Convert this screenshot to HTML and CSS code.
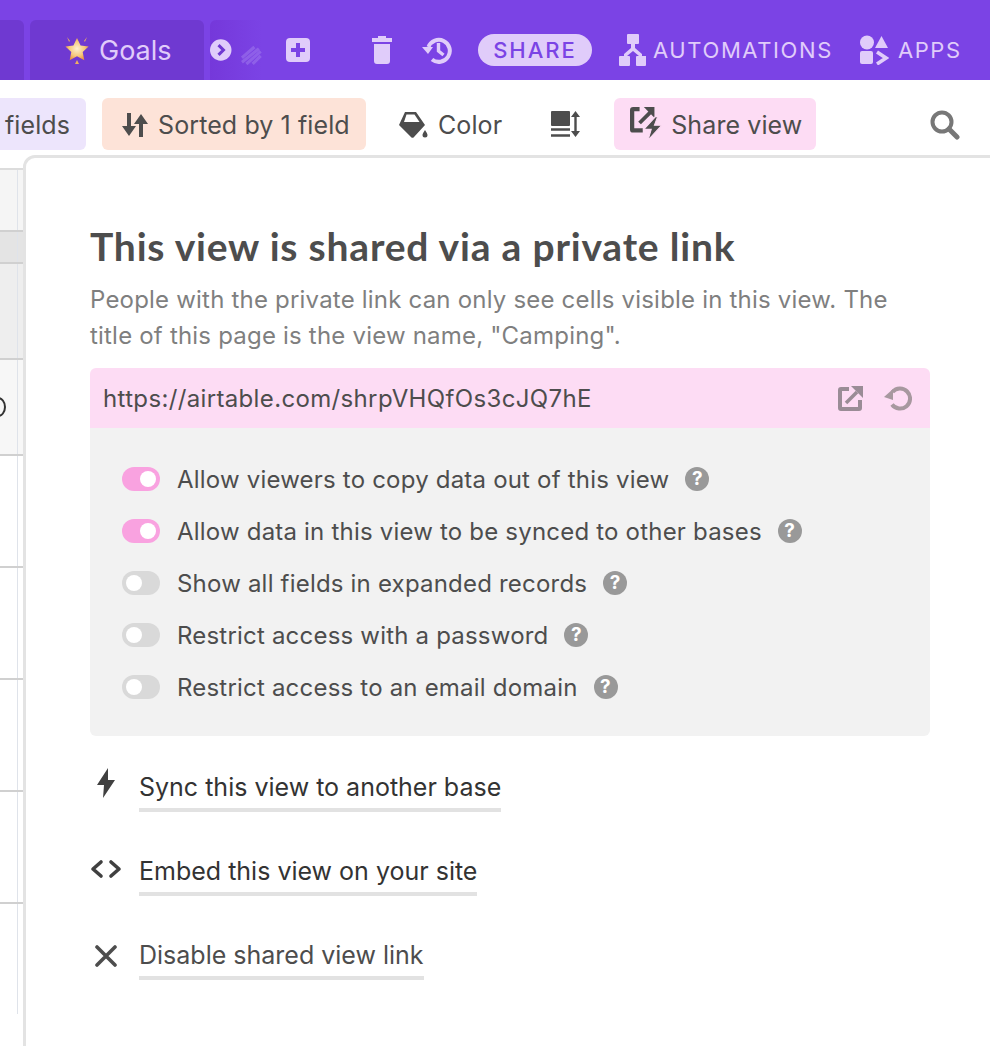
FILE: index.html
```
<!DOCTYPE html>
<html>
<head>
<meta charset="utf-8">
<title>Share view</title>
<link rel="stylesheet" href="styles.css">
</head>
<body>
<div class="app">

  <div class="topbar">
    <div class="tab tab-cut"></div>
    <div class="tab tab-goals">
      <svg class="star" width="28" height="30" viewBox="0 0 28 30">
        <defs><radialGradient id="starfill" cx="50%" cy="48%" r="55%"><stop offset="0" stop-color="#fdf0d0"/><stop offset="0.6" stop-color="#f6c97c"/><stop offset="1" stop-color="#e98f3c"/></radialGradient></defs>
        <path d="M14 3l3.6 7.6 8 1-5.9 5.500 1.6 8.100L14 21.300l-7.300 3.900 1.600-8.100L2.400 11.600l8-1z" fill="url(#starfill)"/>
        <path d="M4 2l3 4-1 .8zM24 2l-3 4 1 .8zM14 25l2 4h-4z" fill="#f0b060"/>
      </svg>
      <span>Goals</span>
    </div>
    <div class="tab-more">
      <svg width="24" height="24" viewBox="0 0 24 24"><circle cx="12" cy="12" r="12" fill="#e0ccfa"/><path d="M9.500 6.500L15 12l-5.500 5.500" fill="none" stroke="#6f39d1" stroke-width="3.400"/></svg>
      <svg class="smear" width="24" height="22" viewBox="0 0 24 22"><path d="M1 14L15 2M1 19L20 4M6 21L22 7M13 21L22 12" fill="none" stroke="#a885f0" stroke-width="3.500"/></svg>
    </div>
    <svg class="add" width="24" height="24" viewBox="0 0 24 24"><rect width="24" height="24" rx="4" fill="#e0ccfa"/><path d="M12 5v14M5 12h14" stroke="#7b43e5" stroke-width="4"/></svg>
    <svg class="trash" width="20" height="28" viewBox="0 0 20 28"><path d="M6 0h8v2h6v4H0V2h6zM2 8h16v17a3 3 0 0 1-3 3H5a3 3 0 0 1-3-3z" fill="#e0ccfa"/></svg>
    <svg class="history" width="30" height="28" viewBox="0 0 30 28"><path d="M6.500 11A11 11 0 1 1 10 23.500" fill="none" stroke="#e0ccfa" stroke-width="4"/><path d="M0 11h11l-5 7z" fill="#e0ccfa"/><path d="M16.500 7v8l5 4" fill="none" stroke="#e0ccfa" stroke-width="3.400"/></svg>
    <div class="share-pill">SHARE</div>
    <div class="top-link automations">
      <svg width="28" height="32" viewBox="0 0 28 32"><path d="M9 0h10a1 1 0 0 1 1 1v8a1 1 0 0 1-1 1h-3v4l7 6v2h4v9a1 1 0 0 1-1 1H18a1 1 0 0 1-1-1v-8a1 1 0 0 1 1-1h2l-6-5-6 5h2a1 1 0 0 1 1 1v8a1 1 0 0 1-1 1H1a1 1 0 0 1-1-1v-8a1 1 0 0 1 1-1h4v-2l7-6v-4H9a1 1 0 0 1-1-1V1a1 1 0 0 1 1-1z" fill="#e0ccfa"/></svg>
      <span>AUTOMATIONS</span>
    </div>
    <div class="top-link apps">
      <svg width="30" height="30" viewBox="0 0 30 30"><circle cx="8" cy="7.500" r="7" fill="#e0ccfa"/><path d="M16 13L22.500 1 29 13z" fill="#e0ccfa"/><rect x="1" y="16" width="13" height="13" rx="2" fill="#e0ccfa"/><path d="M18 17l9 6-9 6" fill="none" stroke="#e0ccfa" stroke-width="3.600"/></svg>
      <span>APPS</span>
    </div>
  </div>

  <div class="toolbar">
    <div class="tool tool-fields">fields</div>
    <div class="tool tool-sort">
      <svg width="26" height="24" viewBox="0 0 26 24"><path d="M5 0h4v13h5l-7 10L0 13h5zM17 24h4V11h5L19 1l-7 10h5z" fill="#4d4d4d"/></svg>
      <span>Sorted by 1 field</span>
    </div>
    <div class="tool tool-color">
      <svg width="30" height="28" viewBox="0 0 30 28"><path d="M7 1h11l9 13L16 26a2 2 0 0 1-3 0L1 14z" fill="#4d4d4d"/><path d="M8.500 3.500h8l5 7.500H6z" fill="#fff"/><path d="M27 19c1.600 2.600 2.500 4 2.500 5a2.500 2.500 0 0 1-5 0c0-1 .9-2.400 2.500-5z" fill="#4d4d4d"/></svg>
      <span>Color</span>
    </div>
    <svg class="row-height" width="30" height="28" viewBox="0 0 30 28"><rect x="0" y="1" width="19" height="15" rx="1" fill="#4d4d4d"/><path d="M0 19.500h19M0 25.500h19" stroke="#4d4d4d" stroke-width="2.400"/><path d="M24.500 3v22" stroke="#4d4d4d" stroke-width="2.400"/><path d="M20 7l4.500-6L29 7zM20 21l4.500 6 4.500-6z" fill="#4d4d4d"/></svg>
    <div class="tool tool-share">
      <svg width="34" height="34" viewBox="0 0 32 32"><path d="M9 3H3a1 1 0 0 0-1 1v18a1 1 0 0 0 1 1h9" fill="none" stroke="#4d4d4d" stroke-width="4"/><path d="M9 16L20 5" stroke="#4d4d4d" stroke-width="3.600"/><path d="M13 1h10v10z" fill="#4d4d4d"/><path d="M24 10l-11 12h7l-3 10 13-14h-7l3-8z" fill="#4d4d4d" stroke="#fddcf4" stroke-width="1"/></svg>
      <span>Share view</span>
    </div>
    <svg class="search" width="30" height="30" viewBox="0 0 30 30"><circle cx="12" cy="12" r="9.500" fill="none" stroke="#777" stroke-width="4"/><path d="M19 19l8 8" stroke="#777" stroke-width="5" stroke-linecap="round"/></svg>
  </div>

  <div class="body-row">
    <div class="grid-strip">
      <div class="grid-head"></div>
      <div class="grid-row row-group"></div>
      <div class="grid-row row-sel"></div>
      <div class="grid-row row-a"></div>
      <div class="grid-row row-b"></div>
      <div class="grid-row row-b"></div>
      <div class="grid-row row-b"></div>
      <div class="grid-row row-b"></div>
      <div class="grid-row row-b"></div>
    </div>

    <div class="popover">
      <h1>This view is shared via a private link</h1>
      <p class="lead">People with the private link can only see cells visible in this view. The title of this page is the view name, "Camping".</p>

      <div class="link-bar">
        <span>https://airtable.com/shrpVHQfOs3cJQ7hE</span>
        <svg width="26" height="26" viewBox="0 0 26 26"><path d="M11 4H3a1 1 0 0 0-1 1v18a1 1 0 0 0 1 1h18a1 1 0 0 0 1-1v-8" fill="none" stroke="#9a8c96" stroke-width="4"/><path d="M8 18L19 7" stroke="#9a8c96" stroke-width="3.600"/><path d="M13 1h12v12z" fill="#9a8c96"/></svg>
        <svg class="reset" width="28" height="26" viewBox="0 0 28 26"><path d="M8.500 7A10 10 0 1 1 8 19.500" fill="none" stroke="#a7989f" stroke-width="4"/><path d="M0 12l9-8v11z" fill="#a7989f"/></svg>
      </div>

      <div class="options">
        <div class="option"><i class="toggle on"></i><span>Allow viewers to copy data out of this view</span><b class="help">?</b></div>
        <div class="option"><i class="toggle on"></i><span>Allow data in this view to be synced to other bases</span><b class="help">?</b></div>
        <div class="option"><i class="toggle"></i><span>Show all fields in expanded records</span><b class="help">?</b></div>
        <div class="option"><i class="toggle"></i><span>Restrict access with a password</span><b class="help">?</b></div>
        <div class="option"><i class="toggle"></i><span>Restrict access to an email domain</span><b class="help">?</b></div>
      </div>

      <div class="actions">
        <div class="action">
          <svg class="icon-sync" width="32" height="30" viewBox="0 0 32 30"><path d="M18 0L7 17h7l-1 13L25 12h-7z" fill="#404040"/></svg>
          <span>Sync this view to another base</span>
        </div>
        <div class="action">
          <svg class="icon-embed" width="32" height="20" viewBox="0 0 32 20"><path d="M11 3L3 10l8 7M21 3l8 7-8 7" fill="none" stroke="#404040" stroke-width="3.600" stroke-linecap="round" stroke-linejoin="round"/></svg>
          <span>Embed this view on your site</span>
        </div>
        <div class="action action-off">
          <svg class="icon-off" width="32" height="22" viewBox="0 0 32 22"><path d="M7 2l18 18M25 2L7 20" stroke="#4d4d4d" stroke-width="3.600" stroke-linecap="round"/></svg>
          <span>Disable shared view link</span>
        </div>
      </div>
    </div>
  </div>

</div>
</body>
</html>
```

FILE: styles.css
```
* {
    box-sizing: border-box;
}

html, body {
    margin: 0;
    padding: 0;
    background: #fff;
}

.app {
    width: 990px;
    height: 1046px;
    overflow: hidden;
    font-family: Inter, "Liberation Sans", sans-serif;
    color: #4d4d4d;
}

/* top purple bar */
.topbar {
    height: 80px;
    background: #7b43e5;
    display: flex;
    align-items: flex-end;
    color: #e0ccfa;
}

.tab {
    height: 60px;
    background: #6f39d1;
    border-radius: 6px 6px 0 0;
}

.tab-cut {
    width: 24px;
    border-radius: 0 6px 0 0;
}

.tab-goals {
    width: 174px;
    margin-left: 6px;
    display: flex;
    align-items: center;
    padding-left: 33px;
    font-size: 27px;
}

.tab-goals span {
    margin-left: 8px;
}

.tab-more {
    height: 60px;
    width: 52px;
    margin-left: 6px;
    display: flex;
    align-items: center;
    background: linear-gradient(90deg, #7538da, #7b43e5);
    border-radius: 6px 0 0 0;
}

.smear {
    margin-left: 9px;
    margin-top: 10px;
    opacity: 0.45;
}

.add {
    margin-left: 24px;
    margin-bottom: 18px;
}

.trash {
    margin-left: 62px;
    margin-bottom: 16px;
}

.history {
    margin-left: 30px;
    margin-bottom: 16px;
}

.share-pill {
    width: 114px;
    height: 32px;
    margin-left: 26px;
    margin-bottom: 14px;
    border-radius: 16px;
    background: #e0ccfa;
    color: #7b43e5;
    font-size: 22px;
    font-weight: 500;
    letter-spacing: 2px;
    display: flex;
    align-items: center;
    justify-content: center;
}

.top-link {
    display: flex;
    align-items: center;
    height: 60px;
    font-size: 22px;
    letter-spacing: 1.6px;
}

.automations {
    margin-left: 27px;
}

.automations span {
    margin-left: 6px;
}

.apps {
    margin-left: 26px;
}

.apps span {
    margin-left: 9px;
}

/* view toolbar */
.toolbar {
    height: 75px;
    padding-top: 18px;
    display: flex;
    align-items: flex-start;
    font-size: 25px;
    letter-spacing: 0.1px;
}

.tool {
    height: 52px;
    padding-top: 2px;
    border-radius: 6px;
    display: flex;
    align-items: center;
}

.tool-fields {
    width: 86px;
    padding-left: 5px;
    background: #ede5fc;
    border-radius: 0 6px 6px 0;
}

.tool-sort {
    width: 264px;
    margin-left: 16px;
    padding-left: 20px;
    background: #fde3d8;
}

.tool-sort span {
    margin-left: 10px;
}

.tool-color {
    margin-left: 32px;
}

.tool-color span {
    margin-left: 10px;
}

.row-height {
    margin-left: 49px;
    margin-top: 12px;
}

.tool-share {
    width: 202px;
    margin-left: 33px;
    padding-left: 16px;
    background: #fddcf4;
}

.tool-share svg {
    margin-top: -4px;
}

.tool-share span {
    margin-left: 7px;
}

.search {
    margin-left: 114px;
    margin-top: 12px;
}

/* grid behind the popover */
.body-row {
    display: flex;
    align-items: flex-start;
}

.grid-strip {
    width: 23px;
    flex: none;
    margin-top: 13px;
    border-top: 2px solid #dcdcdc;
}

.grid-head,
.grid-row {
    background-image: linear-gradient(90deg, transparent 17px, #dfe3ea 17px, #dfe3ea 18px, transparent 18px);
}

.grid-head {
    height: 60px;
    background-color: #f5f5f5;
}

.grid-row {
    border-top: 2px solid #d0d0d0;
}

.row-group {
    height: 32px;
    background-color: #e4e4e4;
}

.row-sel {
    height: 96px;
    background-color: #eeeeee;
}

/* edge of a cell value that the popover hides */
.row-a {
    height: 96px;
    background-color: #f7f7f7;
    overflow: hidden;
    display: flex;
    align-items: center;
}

.row-a::before {
    content: "";
    flex: none;
    width: 12px;
    height: 16px;
    margin-left: -10px;
    border: 2px solid #333;
    border-radius: 50%;
}

.row-b {
    height: 112px;
    background-color: #fff;
}

/* share popover */
.popover {
    width: 990px;
    height: 900px;
    flex: none;
    padding: 66px 0 0 64px;
    background: #fff;
    border: 3px solid #e3e3e3;
    border-radius: 12px 0 0 0;
}

.popover h1 {
    margin: 0;
    font-family: Lato, sans-serif;
    font-weight: 700;
    font-size: 39px;
    line-height: 44px;
    letter-spacing: 0.8px;
    color: #4d4d4d;
}

.lead {
    width: 840px;
    margin: 14px 0 0;
    font-size: 24px;
    line-height: 36px;
    letter-spacing: 0.2px;
    color: #7f7f7f;
}

.link-bar {
    width: 840px;
    height: 60px;
    margin-top: 14px;
    padding: 0 18px 0 13px;
    background: #fddcf4;
    border-radius: 6px 6px 0 0;
    display: flex;
    align-items: center;
    font-size: 24px;
    letter-spacing: 0.35px;
}

.link-bar span {
    flex: 1;
}

.reset {
    margin-left: 20px;
}

.options {
    width: 840px;
    height: 308px;
    padding: 25px 0 0 32px;
    background: #f2f2f2;
    border-radius: 0 0 6px 6px;
}

.option {
    height: 52px;
    display: flex;
    align-items: center;
    font-size: 24px;
    letter-spacing: 0.2px;
}

.toggle {
    width: 38px;
    height: 24px;
    border-radius: 12px;
    background: #d9d9d9;
    display: flex;
    align-items: center;
    padding: 0 4px;
    margin-right: 17px;
}

.toggle::before {
    content: "";
    width: 16px;
    height: 16px;
    border-radius: 50%;
    background: #fff;
}

.toggle.on {
    background: #f9a2e0;
    justify-content: flex-end;
}

.help {
    width: 24px;
    height: 24px;
    margin-left: 16px;
    border-radius: 50%;
    background: #999;
    color: #fff;
    font-size: 19px;
    font-weight: 700;
    text-align: center;
    line-height: 24px;
}

.actions {
    padding-top: 12px;
}

.action {
    height: 84px;
    display: flex;
    align-items: center;
    font-size: 25px;
    color: #333;
}

.action svg {
    flex: none;
    margin-right: 17px;
}

.icon-sync {
    margin-bottom: 14px;
}

.icon-embed {
    margin-bottom: 10px;
}

.icon-off {
    margin-bottom: 4px;
}

.action span {
    border-bottom: 4px solid #e2e2e2;
    padding-bottom: 6px;
    margin-top: 3px;
}

.action-off {
    color: #4d4d4d;
}
```
